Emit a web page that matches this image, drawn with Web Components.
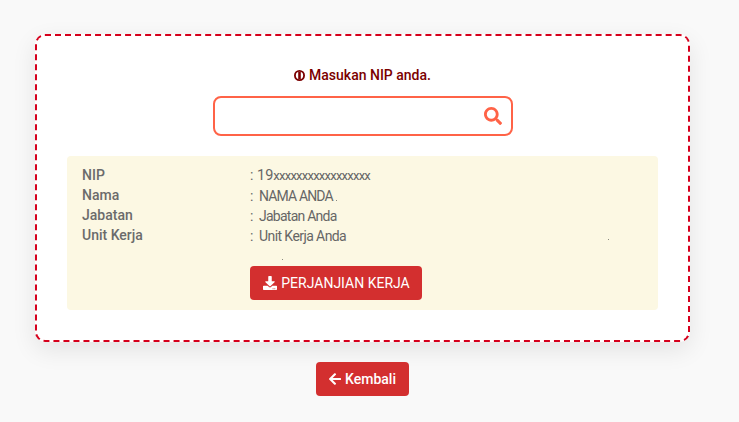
<!DOCTYPE html>
<html lang="id">
<head>
<meta charset="utf-8">
<title>Perjanjian Kerja</title>
<style>
  html, body { margin: 0; height: 100%; }
  body {
    background: #f9f9f9;
    font-family: Roboto, "Liberation Sans", sans-serif;
    overflow: hidden;
  }
</style>
</head>
<body>
<nip-page>
  <nip-card>
    <nip-title>Masukan NIP anda.</nip-title>
    <nip-search></nip-search>
    <nip-info>
      <nip-row label="NIP"><span style="font-size:14.5px;letter-spacing:0">19</span><span style="font-size:13px;letter-spacing:-.76px">xxxxxxxxxxxxxxxxx</span></nip-row>
      <nip-row label="Nama" gap><span style="letter-spacing:-.85px">NAMA ANDA</span></nip-row>
      <nip-row label="Jabatan" gap><span style="letter-spacing:-.75px">Jabatan Anda</span></nip-row>
      <nip-row label="Unit Kerja" gap>Unit Kerja Anda</nip-row>
      <nip-button icon="download" slot="action">PERJANJIAN KERJA</nip-button>
    </nip-info>
  </nip-card>
  <nip-button icon="back" small>Kembali</nip-button>
</nip-page>

<script>
class NipPage extends HTMLElement {
  constructor() {
    super();
    this.attachShadow({ mode: "open" });
  }

  connectedCallback() {
    this.shadowRoot.innerHTML = /* html */`
    <style>
      :host {
        display: flex;
        flex-direction: column;
        align-items: center;
        gap: 20px;
        width: 725px;
        padding-top: 34px;
      }
    </style>
    <slot></slot>`;
  }
}

class NipCard extends HTMLElement {
  constructor() {
    super();
    this.attachShadow({ mode: "open" });
  }

  connectedCallback() {
    this.shadowRoot.innerHTML = /* html */`
    <style>
      :host {
        display: flex;
        flex-direction: column;
        align-items: center;
        box-sizing: border-box;
        width: 655px;
        height: 308px;
        padding: 31px 30px 0;
        background: #fff;
        border: 2px dashed #d6001c;
        border-radius: 10px;
        box-shadow: 0 8px 24px rgba(0, 0, 0, .09);
      }
    </style>
    <slot></slot>`;
  }
}

class NipTitle extends HTMLElement {
  constructor() {
    super();
    this.attachShadow({ mode: "open" });
  }

  connectedCallback() {
    this.shadowRoot.innerHTML = /* html */`
    <style>
      :host {
        display: flex;
        align-items: center;
        gap: 4px;
        height: 16px;
        font-size: 14px;
        font-weight: 500;
        color: #7b0000;
      }
      svg { width: 11px; height: 11px; }
    </style>
    <svg viewBox="0 0 12 12">
      <circle cx="6" cy="6" r="5" fill="none" stroke="currentColor" stroke-width="2"/>
      <rect x="4.6" y="2" width="2.8" height="8" fill="currentColor"/>
    </svg>
    <slot></slot>`;
  }
}

class NipSearch extends HTMLElement {
  constructor() {
    super();
    this.attachShadow({ mode: "open" });
  }

  connectedCallback() {
    this.shadowRoot.innerHTML = /* html */`
    <style>
      :host {
        display: flex;
        align-items: center;
        box-sizing: border-box;
        width: 300px;
        height: 40px;
        margin-top: 13px;
        padding: 0 9px 0 12px;
        border: 2px solid #ff6347;
        border-radius: 8px;
        background: #fff;
      }
      input {
        flex: 1;
        min-width: 0;
        border: 0;
        outline: 0;
        background: none;
        font: 14px Roboto, sans-serif;
      }
      svg { width: 18px; height: 18px; fill: #ff6347; }
    </style>
    <input type="text" aria-label="NIP">
    <svg viewBox="0 0 512 512"><path d="M505 442.7L405.3 343c-4.5-4.5-10.6-7-17-7H372c27.6-35.3 44-79.7 44-128C416 93.1 322.9 0 208 0S0 93.1 0 208s93.1 208 208 208c48.3 0 92.7-16.4 128-44v16.3c0 6.4 2.5 12.5 7 17l99.7 99.7c9.4 9.4 24.6 9.4 33.9 0l28.3-28.3c9.4-9.4 9.4-24.6.1-34zM208 336c-70.7 0-128-57.2-128-128 0-70.7 57.2-128 128-128 70.7 0 128 57.2 128 128 0 70.7-57.2 128-128 128z"/></svg>`;
  }
}

class NipInfo extends HTMLElement {
  constructor() {
    super();
    this.attachShadow({ mode: "open" });
  }

  connectedCallback() {
    this.shadowRoot.innerHTML = /* html */`
    <style>
      :host {
        display: block;
        position: relative;
        box-sizing: border-box;
        width: 591px;
        height: 154px;
        margin-top: 20px;
        padding: 9px 15px 0;
        background: #fcf8e3;
        border-radius: 4px;
      }
      .action { margin: 21px 0 0 168px; }
      .speck { position: absolute; width: 1px; height: 1px; background: #8a8a80; }
    </style>
    <slot></slot>
    <div class="action"><slot name="action"></slot></div>
    <i class="speck" style="left:269px;top:44px"></i>
    <i class="speck" style="left:215px;top:103px"></i>
    <i class="speck" style="left:541px;top:83px"></i>`;
  }
}

class NipRow extends HTMLElement {
  constructor() {
    super();
    this.attachShadow({ mode: "open" });
  }

  connectedCallback() {
    const hasGap = this.hasAttribute("gap");
    this.shadowRoot.innerHTML = /* html */`
    <style>
      :host {
        display: grid;
        grid-template-columns: 168px 1fr;
        height: 20px;
        line-height: 20px;
        font-size: 14px;
        color: #666;
      }
      .label { font-weight: 500; color: #6b6b6b; }
      .value {
        display: flex;
        align-items: baseline;
        letter-spacing: -.58px;
        margin-top: ${hasGap ? "1px" : "0"};
      }
      .colon { width: ${hasGap ? "9px" : "7px"}; flex: none; letter-spacing: 0; }
    </style>
    <div class="label">${this.getAttribute("label")}</div>
    <div class="value"><span class="colon">:</span><span><slot></slot></span></div>`;
  }
}

class NipButton extends HTMLElement {
  static icons = {
    download: `<svg viewBox="0 0 512 512" width="14" height="14"><path d="M216 0h80c13.3 0 24 10.7 24 24v168h87.7c17.8 0 26.7 21.5 14.1 34.1L269.7 378.3c-7.5 7.5-19.8 7.5-27.3 0L90.1 226.1c-12.6-12.6-3.7-34.1 14.1-34.1H192V24c0-13.3 10.7-24 24-24zm296 376v112c0 13.3-10.7 24-24 24H24c-13.3 0-24-10.7-24-24V376c0-13.3 10.7-24 24-24h146.7l49 49c20.1 20.1 52.5 20.1 72.6 0l49-49H488c13.3 0 24 10.7 24 24zm-124 88c0-11-9-20-20-20s-20 9-20 20 9 20 20 20 20-9 20-20zm64 0c0-11-9-20-20-20s-20 9-20 20 9 20 20 20 20-9 20-20z"/></svg>`,
    back: `<svg viewBox="0 0 448 512" width="12" height="14"><path d="M257.5 445.1l-22.2 22.2c-9.4 9.4-24.6 9.4-33.9 0L7 273c-9.4-9.4-9.4-24.6 0-33.9L201.4 44.7c9.4-9.4 24.6-9.4 33.9 0l22.2 22.2c9.5 9.5 9.3 25-.4 34.3L136.6 216H424c13.3 0 24 10.7 24 24v32c0 13.3-10.7 24-24 24H136.6l120.5 114.8c9.8 9.3 10 24.8.4 34.3z"/></svg>`
  };

  constructor() {
    super();
    this.attachShadow({ mode: "open" });
  }

  connectedCallback() {
    const small = this.hasAttribute("small");
    this.shadowRoot.innerHTML = /* html */`
    <style>
      :host {
        display: inline-flex;
        align-items: center;
        justify-content: center;
        gap: ${small ? "4px" : "4px"};
        box-sizing: border-box;
        width: ${small ? "93px" : "172px"};
        height: 34px;
        padding-left: ${small ? "0" : "1px"};
        background: #d32f2f;
        border-radius: 4px;
        font-size: 14px;
        font-weight: ${small ? 500 : 400};
        color: #fff;
      }
      svg { fill: #fff; flex: none; }
    </style>
    ${NipButton.icons[this.getAttribute("icon")]}
    <slot></slot>`;
  }
}

customElements.define("nip-page", NipPage);
customElements.define("nip-card", NipCard);
customElements.define("nip-title", NipTitle);
customElements.define("nip-search", NipSearch);
customElements.define("nip-info", NipInfo);
customElements.define("nip-row", NipRow);
customElements.define("nip-button", NipButton);
</script>
</body>
</html>
